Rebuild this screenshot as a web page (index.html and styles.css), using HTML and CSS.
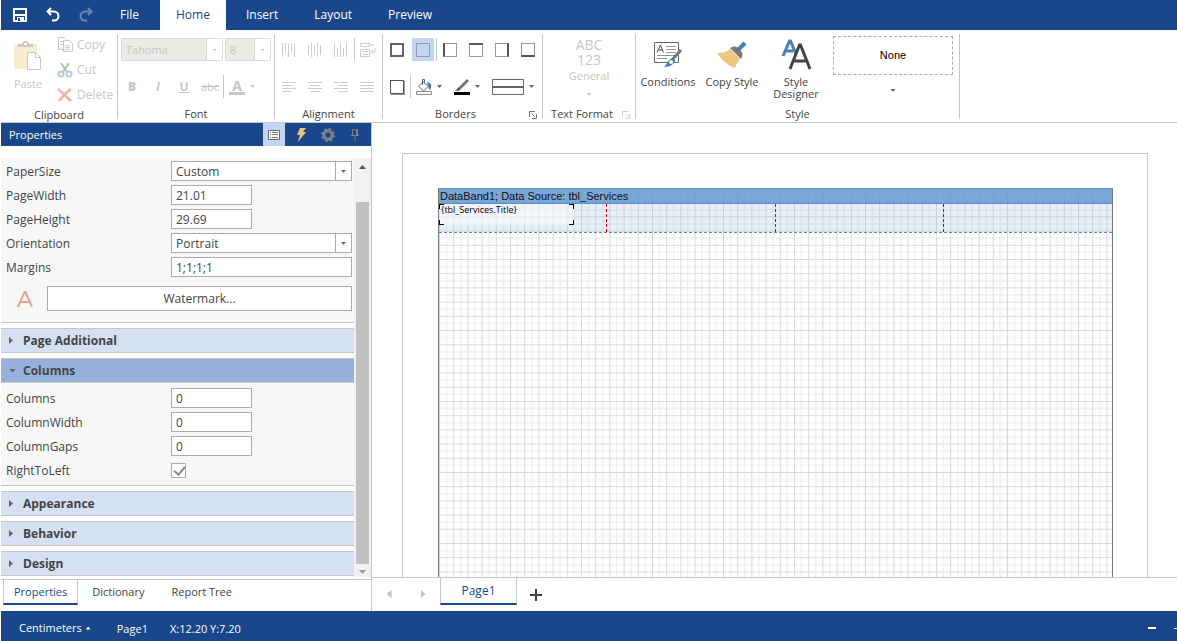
FILE: index.html
```
<!DOCTYPE html>
<html lang="en">
<head>
  <meta charset="UTF-8">
  <title>Report Designer</title>
  <link rel="stylesheet" href="styles.css">
</head>
<body>
  <div class="app">

    <!-- Top menu -->
    <header class="menubar">
      <div class="quick">
        <button class="quick-btn" aria-label="Save">
          <svg width="14" height="14" viewBox="0 0 14 14"><path d="M1 1h12v12H1z" fill="none" stroke="#fff" stroke-width="2"/><path d="M2 6h10v2H2zM4 9h7v4H4z" fill="#fff"/><path d="M5 10h2v3H5z" fill="#19478a"/></svg>
        </button>
        <button class="quick-btn" aria-label="Undo">
          <svg width="16" height="16" viewBox="0 0 16 16"><path d="M6 1L2.500 4.500 6 8M3 4.500h5.500c3 0 5 2 5 4.500s-2 4.500-4.500 4.500H7" fill="none" stroke="#fff" stroke-width="2"/></svg>
        </button>
        <button class="quick-btn faded" aria-label="Redo">
          <svg width="16" height="16" viewBox="0 0 16 16"><path d="M10 1l3.500 3.500L10 8M13 4.500H7.500c-3 0-5 2-5 4.500s2 4.500 4.500 4.500h2" fill="none" stroke="#fff" stroke-width="2"/></svg>
        </button>
      </div>
      <nav class="menu">
        <button class="menu-tab">File</button>
        <button class="menu-tab active">Home</button>
        <button class="menu-tab">Insert</button>
        <button class="menu-tab">Layout</button>
        <button class="menu-tab">Preview</button>
      </nav>
    </header>

    <!-- Ribbon -->
    <div class="ribbon">
      <section class="group clipboard">
        <div class="group-body">
          <button class="big-btn" disabled>
            <svg width="28" height="32" viewBox="0 0 28 32"><path d="M0 4h23v25H0z" fill="#faecd0"/><path d="M4 7V4h4c0-4 7-4 7 0h4v3z" fill="#c8c8c8"/><path d="M10 3h3v2h-3z" fill="#fff"/><path d="M13.500 12.500h8l5 5v12h-13z" fill="#fff" stroke="#c8c8c8"/><path d="M21.500 12.500v5h5" fill="none" stroke="#c8c8c8"/></svg>
            <span>Paste</span>
          </button>
          <div class="small-btns">
            <button class="small-btn" disabled>
              <svg width="16" height="16" viewBox="0 0 16 16"><path d="M6.500 12.500h-5V.5h6l2 2v2" fill="none" stroke="#c8c8c8"/><path d="M6.500 3.500h6l3 3v8h-9z" fill="#fff" stroke="#c8c8c8"/><path d="M3 4.500h3M3 7.500h3M8 8.500h5M8 10.500h5M8 12.500h5" stroke="#b8cce2"/></svg>
              Copy
            </button>
            <button class="small-btn" disabled>
              <svg width="16" height="16" viewBox="0 0 16 16"><path d="M4 1l6 9M12 1l-6 9" stroke="#bbb" stroke-width="2"/><circle cx="4" cy="12" r="2.500" fill="none" stroke="#b4cce6" stroke-width="2"/><circle cx="12" cy="12" r="2.500" fill="none" stroke="#b4cce6" stroke-width="2"/></svg>
              Cut
            </button>
            <button class="small-btn" disabled>
              <svg width="16" height="16" viewBox="0 0 16 16"><path d="M1 2l13 12M14 2Q7 7 2 14" fill="none" stroke="#f1b8a8" stroke-width="3"/></svg>
              Delete
            </button>
          </div>
        </div>
        <h2 class="group-title">Clipboard</h2>
      </section>

      <section class="group font">
        <div class="group-body rows">
          <div class="row fields">
            <span class="combo off family"><select aria-label="Font name" disabled><option>Tahoma</option></select></span>
            <span class="combo off size"><select aria-label="Font size" disabled><option>8</option></select></span>
          </div>
          <div class="row">
            <button class="tool letter" disabled><b>B</b></button>
            <button class="tool letter" disabled><i>I</i></button>
            <button class="tool letter" disabled><u>U</u></button>
            <button class="tool" disabled><s>abc</s></button>
            <span class="sep"></span>
            <button class="tool" aria-label="Text color" disabled><span class="letter-a">A</span></button>
            <span class="caret light"></span>
          </div>
        </div>
        <h2 class="group-title">Font</h2>
      </section>

      <section class="group alignment">
        <div class="group-body rows">
          <div class="row">
            <button class="tool" aria-label="Align top" disabled><svg width="14" height="14" viewBox="0 0 14 14"><path d="M.5 0v14M3.500 0v9M6.500 0v14M9.500 0v9M12.500 0v14" stroke="#ccc"/></svg></button>
            <button class="tool" aria-label="Align middle" disabled><svg width="14" height="14" viewBox="0 0 14 14"><path d="M.5 2v10M3.500 0v14M6.500 2v10M9.500 0v14M12.500 2v10" stroke="#ccc"/></svg></button>
            <button class="tool" aria-label="Align bottom" disabled><svg width="14" height="14" viewBox="0 0 14 14"><path d="M.5 0v14M3.500 5v9M6.500 0v14M9.500 5v9M12.500 0v14" stroke="#ccc"/></svg></button>
            <span class="sep"></span>
            <button class="tool" aria-label="Word wrap" disabled><svg width="16" height="16" viewBox="0 0 16 16"><path d="M.5 1.500h9v3h-9zM9 3h5M.5 7.500h9v7h-9zM2 9.500h6M2 12.500h6M15 6v4h-4M13 7.500L11 10l2 2.500" fill="none" stroke="#ccc"/></svg></button>
          </div>
          <div class="row">
            <button class="tool" aria-label="Align left" disabled><svg width="14" height="10" viewBox="0 0 14 10"><path d="M0 .5h14M0 3.500h10M0 6.500h14M0 9.500h10" stroke="#ccc"/></svg></button>
            <button class="tool" aria-label="Align center" disabled><svg width="14" height="10" viewBox="0 0 14 10"><path d="M0 .5h14M2 3.500h10M0 6.500h14M2 9.500h10" stroke="#ccc"/></svg></button>
            <button class="tool" aria-label="Align right" disabled><svg width="14" height="10" viewBox="0 0 14 10"><path d="M0 .5h14M4 3.500h10M0 6.500h14M4 9.500h10" stroke="#ccc"/></svg></button>
            <button class="tool" aria-label="Justify" disabled><svg width="14" height="10" viewBox="0 0 14 10"><path d="M0 .5h14M0 3.500h14M0 6.500h14M0 9.500h14" stroke="#ccc"/></svg></button>
          </div>
        </div>
        <h2 class="group-title">Alignment</h2>
      </section>

      <section class="group borders has-launcher">
        <div class="group-body rows">
          <div class="row">
            <button class="tool" aria-label="All borders"><span class="edge all"></span></button>
            <button class="tool on" aria-label="No borders"><span class="edge"></span></button>
            <span class="sep"></span>
            <button class="tool" aria-label="Left border"><span class="edge left"></span></button>
            <button class="tool" aria-label="Top border"><span class="edge top"></span></button>
            <button class="tool" aria-label="Right border"><span class="edge right"></span></button>
            <button class="tool" aria-label="Bottom border"><span class="edge bottom"></span></button>
          </div>
          <div class="row">
            <button class="tool" aria-label="Shadow"><span class="edge shadow"></span></button>
            <span class="sep"></span>
            <button class="tool" aria-label="Background color"><svg width="16" height="16" viewBox="0 0 16 16"><path d="M6.500 2.500l6 4.500-5 5-5-5 5-4.500M6.500 6V.5h2V4" fill="none" stroke="#666"/><path d="M11 3c5 1 5 4 3 8-2-1-1-3-2-5z" fill="#4a7fb5"/><path d="M.5 12.500h15v3H.5z" fill="#fff" stroke="#888"/></svg></button>
            <span class="caret"></span>
            <button class="tool" aria-label="Border color"><svg width="16" height="16" viewBox="0 0 16 16"><path d="M14 1L6 9" stroke="#777" stroke-width="3"/><path d="M5 8l2 2c-2 2-4 2-6 2 2-1 2-3 4-4z" fill="#555"/><path d="M0 13h16v3H0z" fill="#000"/></svg></button>
            <span class="caret"></span>
            <button class="tool line" aria-label="Border style"><span class="line-sample"></span></button>
            <span class="caret"></span>
          </div>
        </div>
        <h2 class="group-title">Borders</h2>
        <button class="launcher" aria-label="Border settings"><svg width="8" height="8" viewBox="0 0 8 8"><path d="M.5 6V.5H6M3 3l3 3M3 7.500h4.500V3" fill="none" stroke="#777"/></svg></button>
      </section>

      <section class="group format has-launcher">
        <div class="group-body">
          <button class="format-btn" disabled>
            <span class="abc">ABC<br>123</span>
            <span>General</span>
            <span class="caret light"></span>
          </button>
        </div>
        <h2 class="group-title">Text Format</h2>
        <button class="launcher faded" aria-label="Format settings" disabled><svg width="8" height="8" viewBox="0 0 8 8"><path d="M.5 6V.5H6M3 3l3 3M3 7.500h4.500V3" fill="none" stroke="#777"/></svg></button>
      </section>

      <section class="group style">
        <div class="group-body">
          <button class="big-btn">
            <svg width="32" height="32" viewBox="0 0 32 32"><path d="M2.500 4.500h24v20h-24z" fill="#fff" stroke="#666"/><path d="M5 14.500L8.500 7l3 7.500M6.500 12h4" fill="none" stroke="#444"/><path d="M14 8.500h10M14 11.500h10M14 14.500h10M5 17.500h19M5 20.500h10" stroke="#999"/><path d="M29 12L20 22" stroke="#777" stroke-width="3"/><path d="M20 20c3 0 4 3 2 5-3 3-6 4-10 4 3-2 3-7 8-9z" fill="#4a7fb5"/><circle cx="19" cy="24" r="2" fill="#fff"/></svg>
            <span>Conditions</span>
          </button>
          <button class="big-btn">
            <svg width="32" height="32" viewBox="0 0 32 32"><path d="M1 15c6 0 10-1 13-4l10 10c-2 3-4 5-5 9C11 27 6 22 1 15z" fill="#edc67c"/><path d="M14 10c3-2 6-2 8 0l3 3c2 2 2 5 0 8z" fill="#777"/><path d="M22 12l7-7" stroke="#4a7fb5" stroke-width="4"/></svg>
            <span>Copy Style</span>
          </button>
          <button class="big-btn">
            <svg width="32" height="32" viewBox="0 0 32 32"><g fill="none"><path d="M3 18L9.500 3h1L16 16M5 13h8" stroke="#4a7fb5" stroke-width="3"/><path d="M10 31L19.500 7h1L30 31M13.500 23h13" stroke="#444" stroke-width="3"/></g></svg>
            <span>Style<br>Designer</span>
          </button>
          <button class="style-btn">
            <span class="style-sample">None</span>
            <span class="caret"></span>
          </button>
        </div>
        <h2 class="group-title">Style</h2>
      </section>
    </div>

    <div class="main">
      <!-- Properties panel -->
      <aside class="panel">
        <div class="panel-head">
          <h1>Properties</h1>
          <button class="head-btn on" aria-label="Property list"><svg width="12" height="12" viewBox="0 0 12 12"><path d="M.5 1.500h11v9H.5z" fill="#fff" stroke="#666"/><path d="M2 3.500h1M4 3.500h6M2 5.500h1M4 5.500h6M2 8.500h1M4 8.500h6" stroke="#777"/></svg></button>
          <button class="head-btn" aria-label="Events"><svg width="12" height="14" viewBox="0 0 12 14"><path d="M5 0h6L8 4h3L3 14l2-7H2z" fill="#edc67c"/></svg></button>
          <button class="head-btn" aria-label="Settings"><svg width="14" height="14" viewBox="0 0 14 14"><circle cx="7" cy="7" r="4" fill="none" stroke="#7d8086" stroke-width="3"/><circle cx="7" cy="7" r="6" fill="none" stroke="#7d8086" stroke-width="2" stroke-dasharray="2.700 2"/></svg></button>
          <button class="head-btn" aria-label="Pin"><svg width="8" height="12" viewBox="0 0 8 12"><path d="M1.500 6V.5h5V6M0 6.500h8M4 7v5M5.500 1v5" fill="none" stroke="#7d8086"/></svg></button>
        </div>

        <div class="panel-body">
          <div class="props">
            <div class="fieldset first">
              <div class="prop"><label for="paper-size">PaperSize</label><span class="combo"><select id="paper-size"><option>Custom</option></select></span></div>
              <div class="prop"><label for="page-width">PageWidth</label><input class="short" id="page-width" type="text" value="21.01"></div>
              <div class="prop"><label for="page-height">PageHeight</label><input class="short" id="page-height" type="text" value="29.69"></div>
              <div class="prop"><label for="orientation">Orientation</label><span class="combo"><select id="orientation"><option>Portrait</option></select></span></div>
              <div class="prop"><label for="margins">Margins</label><input id="margins" type="text" value="1;1;1;1"></div>
              <div class="watermark">
                <svg width="16" height="16" viewBox="0 0 16 16"><path d="M1 16L7.500 1h1L15 16M4 11h8" fill="none" stroke="#eba28f" stroke-width="2"/></svg>
                <button class="watermark-btn">Watermark...</button>
              </div>
            </div>
            <button class="category">Page Additional</button>
            <button class="category open">Columns</button>
            <div class="fieldset">
              <div class="prop"><label for="columns">Columns</label><input class="short" id="columns" type="text" value="0"></div>
              <div class="prop"><label for="column-width">ColumnWidth</label><input class="short" id="column-width" type="text" value="0"></div>
              <div class="prop"><label for="column-gaps">ColumnGaps</label><input class="short" id="column-gaps" type="text" value="0"></div>
              <div class="prop"><label for="rtl">RightToLeft</label><input id="rtl" type="checkbox" checked></div>
            </div>
            <button class="category">Appearance</button>
            <button class="category">Behavior</button>
            <button class="category">Design</button>
          </div>
          <div class="scrollbar">
            <span class="arrow up"></span>
            <span class="thumb"></span>
            <span class="arrow down"></span>
          </div>
        </div>

        <nav class="panel-tabs">
          <button class="panel-tab active">Properties</button>
          <button class="panel-tab">Dictionary</button>
          <button class="panel-tab">Report Tree</button>
        </nav>
      </aside>

      <!-- Report page -->
      <div class="workspace">
        <div class="canvas">
          <div class="sheet">
            <div class="sheet-inner">
              <svg class="grid" aria-hidden="true">
                <defs>
                  <pattern id="cells" width="14.200" height="14.200" patternUnits="userSpaceOnUse">
                    <path d="M7.500 0v14.200M0 7.500h14.200" stroke="#eaeaea"/>
                    <path d="M.5 0v14.200M0 .5h14.200" stroke="#d9d9d9"/>
                  </pattern>
                </defs>
                <rect width="100%" height="100%" fill="url(#cells)"/>
              </svg>
              <div class="band">
                <div class="band-title">DataBand1; Data Source: tbl_Services</div>
                <div class="band-cells">
                  <span></span><span></span><span></span><span></span>
                  <div class="text-item">{tbl_Services.Title}<i></i></div>
                </div>
              </div>
            </div>
          </div>
        </div>
        <nav class="page-tabs">
          <button class="page-nav" aria-label="Previous page"><span class="tri prev"></span></button>
          <button class="page-nav" aria-label="Next page"><span class="tri next"></span></button>
          <button class="page-tab">Page1</button>
          <button class="page-add" aria-label="Add page"><svg width="12" height="12" viewBox="0 0 12 12"><path d="M6 0v12M0 6h12" stroke="#444" stroke-width="2"/></svg></button>
        </nav>
      </div>
    </div>

    <footer class="status">
      <button class="units">Centimeters <span class="arrow up"></span></button>
      <span>Page1</span>
      <span>X:12.20 Y:7.20</span>
      <button class="zoom-out" aria-label="Zoom out"></button>
      <span class="zoom-track"></span>
    </footer>
  </div>
</body>
</html>
```
FILE: styles.css
```
* {
  box-sizing: border-box;
}
body {
  margin: 0;
  font-family: "Open Sans", "Noto Sans", sans-serif;
  font-size: 12px;
  color: #444;
  background: #fff;
}
button, input, select {
  font: inherit;
  color: inherit;
}
button {
  padding: 0;
  border: none;
  background: none;
  line-height: 16px;
}
svg {
  display: block;
  flex: none;
}
h1, h2 {
  margin: 0;
  font-size: 11px;
  font-weight: normal;
}
.app {
  display: flex;
  flex-direction: column;
  height: 100vh;
  padding-left: 1px;
  overflow: hidden;
}
.faded {
  opacity: 0.35;
}

/* Top menu */
.menubar {
  display: flex;
  flex: none;
  height: 30px;
  background: #19478a;
}
.quick {
  display: flex;
  width: 101px;
  padding-left: 2px;
}
.quick-btn {
  display: flex;
  align-items: center;
  justify-content: center;
  width: 33px;
}
.menu {
  display: flex;
}
.menu-tab {
  padding: 0 18px;
  color: #fff;
}
.menu-tab.active {
  padding: 0 16px;
  margin: 0 2px 0 3px;
  background: #fff;
  color: #19478a;
}

/* Ribbon */
.ribbon {
  display: flex;
  flex: none;
  height: 93px;
  padding-top: 4px;
  border-bottom: 1px solid #c6c6c6;
  font-size: 11px;
}
.group {
  position: relative;
  display: flex;
  flex-direction: column;
  justify-content: space-between;
  height: 85px;
  border-right: 1px solid #c6c6c6;
}
.group-title {
  line-height: 11px;
  text-align: center;
}
.has-launcher .group-title {
  padding-right: 14px;
}
.group-body {
  display: flex;
}
.rows {
  flex-direction: column;
  gap: 14px;
  padding: 4px 1px 0;
}
.row {
  display: flex;
  align-items: center;
  height: 23px;
}
.clipboard {
  width: 117px;
}
.font {
  width: 157px;
}
.alignment {
  width: 108px;
}
.borders {
  width: 160px;
}
.format {
  width: 93px;
}
.style {
  width: 324px;
}
.big-btn {
  display: flex;
  flex-direction: column;
  align-items: center;
  gap: 6px;
  width: 64px;
  padding-top: 4px;
  line-height: 12px;
}
.clipboard .big-btn {
  width: 54px;
  padding-top: 6px;
}
.small-btns {
  display: flex;
  flex-direction: column;
  justify-content: flex-start;
  font-size: 12px;
}
.small-btn {
  display: flex;
  align-items: center;
  gap: 4px;
  height: 25px;
  padding: 0 0 4px 2px;
}
button:disabled {
  color: #c6c6c6;
}
.tool {
  display: flex;
  align-items: center;
  justify-content: center;
  width: 22px;
  height: 23px;
  margin: 0 2px;
}
.tool.on, .head-btn.on {
  background: #c2d5f2;
}
.letter {
  font-size: 12px;
  font-weight: bold;
}
.fields {
  gap: 2px;
  padding-left: 2px;
}
.sep {
  width: 1px;
  height: 23px;
  background: #c6c6c6;
}
.letter-a {
  width: 16px;
  height: 16px;
  font-size: 14px;
  font-weight: bold;
  line-height: 13px;
  border-bottom: 3px solid #c6c6c6;
}
.caret {
  flex: none;
  width: 5px;
  height: 3px;
  background: #666;
  clip-path: polygon(0 0, 100% 0, 50% 100%);
}
.caret.light {
  background: #c6c6c6;
}
.edge {
  width: 14px;
  height: 14px;
  border: 1px solid #999;
}
.edge.all {
  border: 2px solid #666;
}
.edge.left {
  border-left: 2px solid #555;
}
.edge.top {
  border-top: 2px solid #555;
}
.edge.right {
  border-right: 2px solid #555;
}
.edge.bottom {
  border-bottom: 2px solid #555;
}
.edge.shadow {
  border-color: #555;
  box-shadow: 1px 1px 0 #999;
}
.borders .row .caret {
  margin-right: 7px;
}
.tool.line {
  width: 32px;
  margin: 0 5px;
}
.line-sample {
  width: 32px;
  height: 16px;
  border: 1px solid #666;
  background: linear-gradient(#666, #666) center / 100% 2px no-repeat;
}
.launcher {
  position: absolute;
  right: 5px;
  bottom: 0;
}
.format-btn {
  display: flex;
  flex: 1;
  flex-direction: column;
  align-items: center;
  padding-top: 3px;
  line-height: 18px;
}
.format-btn .caret {
  margin-top: 8px;
}
.abc {
  font-size: 14px;
  line-height: 15px;
}
.style-btn {
  display: flex;
  flex-direction: column;
  align-items: center;
  gap: 14px;
  padding: 2px 6px 0 5px;
}
.style-sample {
  width: 120px;
  border: 1px dashed #aaa;
  color: #000;
  font: 11px/37px "Liberation Sans", Arial, sans-serif;
}

/* Combo boxes and inputs */
.combo {
  position: relative;
  display: flex;
  flex: 1;
  height: 20px;
  border: 1px solid #ababab;
  background: #fff;
}
.combo::after {
  content: "";
  position: absolute;
  right: 5px;
  top: calc(50% - 1px);
  width: 5px;
  height: 3px;
  background: #666;
  clip-path: polygon(0 0, 100% 0, 50% 100%);
  pointer-events: none;
}
.combo select {
  flex: 1;
  min-width: 0;
  padding: 0 4px;
  margin-right: 15px;
  border: none;
  border-right: 1px solid #ababab;
  border-radius: 0;
  background: none;
  appearance: none;
}
.combo.off {
  flex: none;
  height: 23px;
  border-color: #dadada;
}
.combo.off select {
  border-color: #dadada;
  background: #ebebe7;
  color: #c6c6c6;
  opacity: 1;
}
.combo.off::after {
  background: #c6c6c6;
}
.combo.family {
  width: 102px;
}
.combo.size {
  width: 46px;
}

/* Properties panel */
.main {
  display: flex;
  flex: 1;
  min-height: 0;
}
.panel {
  display: flex;
  flex: none;
  flex-direction: column;
  width: 371px;
  border-right: 1px solid #c6c6c6;
}
.panel-head {
  display: flex;
  flex: none;
  height: 23px;
  padding-left: 8px;
  background: #19478a;
  color: #fff;
}
.panel-head h1 {
  flex: 1;
  line-height: 23px;
}
.head-btn {
  display: flex;
  align-items: center;
  justify-content: center;
  width: 22px;
  margin-right: 5px;
}
.panel-body {
  display: flex;
  flex: 1;
  min-height: 0;
  margin: 12px 0 2px;
}
.props {
  flex: 1;
  overflow: hidden;
}
.fieldset {
  padding: 3px 2px 3px 5px;
  border-bottom: 1px solid #c6c6c6;
  background: #f7f7f7;
}
.prop {
  display: flex;
  align-items: center;
  height: 24px;
}
.first .prop {
  height: 20px;
  margin-bottom: 4px;
}
.prop label {
  width: 165px;
}
.prop input {
  flex: 1;
  min-width: 0;
  height: 20px;
  padding: 0 4px;
  border: 1px solid #ababab;
  background: #fff;
}
.prop .short {
  flex: none;
  width: 81px;
}
.prop input[type="checkbox"] {
  flex: none;
  width: 15px;
  height: 15px;
  margin: 0;
  padding: 0;
  appearance: none;
}
.prop input:checked::after {
  content: "";
  display: block;
  width: 5px;
  height: 9px;
  margin: 0 0 0 4px;
  border: solid #888;
  border-width: 0 2px 2px 0;
  transform: rotate(40deg);
}
.watermark {
  display: flex;
  align-items: center;
  gap: 14px;
  margin: 9px 0 8px;
  padding-left: 11px;
}
.watermark-btn {
  flex: 1;
  height: 25px;
  border: 1px solid #ababab;
  background: #fff;
}
.category {
  display: flex;
  align-items: center;
  width: 100%;
  height: 25px;
  margin: 5px 0;
  padding-left: 8px;
  border: solid #c6c6c6;
  border-width: 1px 0;
  background: #d5e0f2;
  font-weight: bold;
}
.category::before {
  content: "";
  width: 4px;
  height: 7px;
  margin-right: 10px;
  background: #666;
  clip-path: polygon(0 0, 100% 50%, 0 100%);
}
.category.open {
  margin-bottom: 0;
  background: #97b1dc;
}
.category.open::before {
  width: 7px;
  height: 4px;
  margin-right: 7px;
  clip-path: polygon(0 0, 100% 0, 50% 100%);
}
.scrollbar {
  display: flex;
  flex-direction: column;
  align-items: center;
  width: 17px;
  padding: 7px 0 3px;
  background: #f1f1f1;
}
.arrow {
  width: 7px;
  height: 4px;
  background: #555;
  clip-path: polygon(0 100%, 50% 0, 100% 100%);
}
.arrow.down {
  background: #999;
  clip-path: polygon(0 0, 100% 0, 50% 100%);
}
.thumb {
  flex: 1;
  width: 13px;
  margin: 33px 0 6px;
  background: #c1c1c1;
}
.panel-tabs {
  display: flex;
  flex: none;
  height: 32px;
  padding: 0 2px 6px;
  border-top: 1px solid #c6c6c6;
  font-size: 11px;
}
.panel-tab {
  padding: 0 13px 0 14px;
  border-bottom: 2px solid transparent;
}
.panel-tab.active {
  padding: 0 10px;
  border: solid #c6c6c6;
  border-width: 0 1px 2px;
  border-bottom-color: #19478a;
  color: #19478a;
}

/* Report page */
.workspace {
  display: flex;
  flex: 1;
  flex-direction: column;
  min-width: 0;
}
.canvas {
  display: flex;
  flex: 1;
  min-height: 0;
  padding: 30px 29px 0 30px;
}
.sheet {
  display: flex;
  flex: 1;
  padding: 34px 34px 0 35px;
  border: 1px solid #c6c6c6;
  border-bottom: none;
}
.sheet-inner {
  position: relative;
  flex: 1;
  overflow: hidden;
  border: 1px solid #777;
  border-width: 0 1px;
}
.grid {
  position: absolute;
  width: 100%;
  height: 100%;
}
.band {
  position: relative;
  border-bottom: 1px dashed #5b8ac0;
}
.band-title {
  height: 16px;
  padding-left: 1px;
  border: solid #5b8fcb;
  border-width: 1px 0;
  background: rgba(91, 145, 207, 0.8);
  color: #111;
  font: 11px/14px "Liberation Sans", Arial, sans-serif;
}
.band-cells {
  position: relative;
  display: grid;
  grid-template-columns: repeat(4, 1fr);
  height: 28px;
  background: rgba(91, 145, 207, 0.15);
}
.band-cells span:nth-child(-n+3) {
  border-right: 1px dashed #d00;
}
.text-item {
  position: absolute;
  left: 0;
  top: 0;
  width: 135px;
  height: 21px;
  padding-left: 2px;
  background: rgba(255, 255, 255, 0.5);
  color: #000;
  font-size: 9px;
  line-height: 11px;
}
/* corner marks */
.text-item::before, .text-item::after, .text-item i::before, .text-item i::after {
  content: "";
  position: absolute;
  width: 4px;
  height: 4px;
  border: solid #000;
}
.text-item::before {
  left: 0;
  top: 0;
  border-width: 1px 0 0 1px;
}
.text-item::after {
  right: 0;
  top: 0;
  border-width: 1px 1px 0 0;
}
.text-item i::before {
  left: 0;
  bottom: 0;
  border-width: 0 0 1px 1px;
}
.text-item i::after {
  right: 0;
  bottom: 0;
  border-width: 0 1px 1px 0;
}
.page-tabs {
  display: flex;
  flex: none;
  height: 34px;
  border-top: 1px solid #c6c6c6;
}
.page-nav {
  width: 34px;
}
.tri {
  display: inline-block;
  width: 5px;
  height: 9px;
  background: #c6c6c6;
}
.tri.prev {
  clip-path: polygon(100% 0, 0 50%, 100% 100%);
}
.tri.next {
  clip-path: polygon(0 0, 100% 50%, 0 100%);
}
.page-tab {
  width: 77px;
  height: 27px;
  border: solid #c6c6c6;
  border-width: 0 1px 2px;
  border-bottom-color: #19478a;
  color: #19478a;
}
.page-add {
  padding: 0 13px;
}

/* Status bar */
.status {
  display: flex;
  flex: none;
  align-items: center;
  gap: 22px;
  height: 30px;
  padding: 4px 0 0 18px;
  background: #19478a;
  color: #fff;
  font-size: 11px;
}
.units {
  display: flex;
  align-items: center;
  gap: 4px;
  margin-right: 4px;
}
.units .arrow {
  width: 5px;
  height: 3px;
  background: #fff;
}
.zoom-out {
  width: 8px;
  height: 2px;
  margin-left: auto;
  background: #fff;
}
.zoom-track {
  width: 3px;
  height: 1px;
  margin-left: -4px;
  background: #fff;
}
```
